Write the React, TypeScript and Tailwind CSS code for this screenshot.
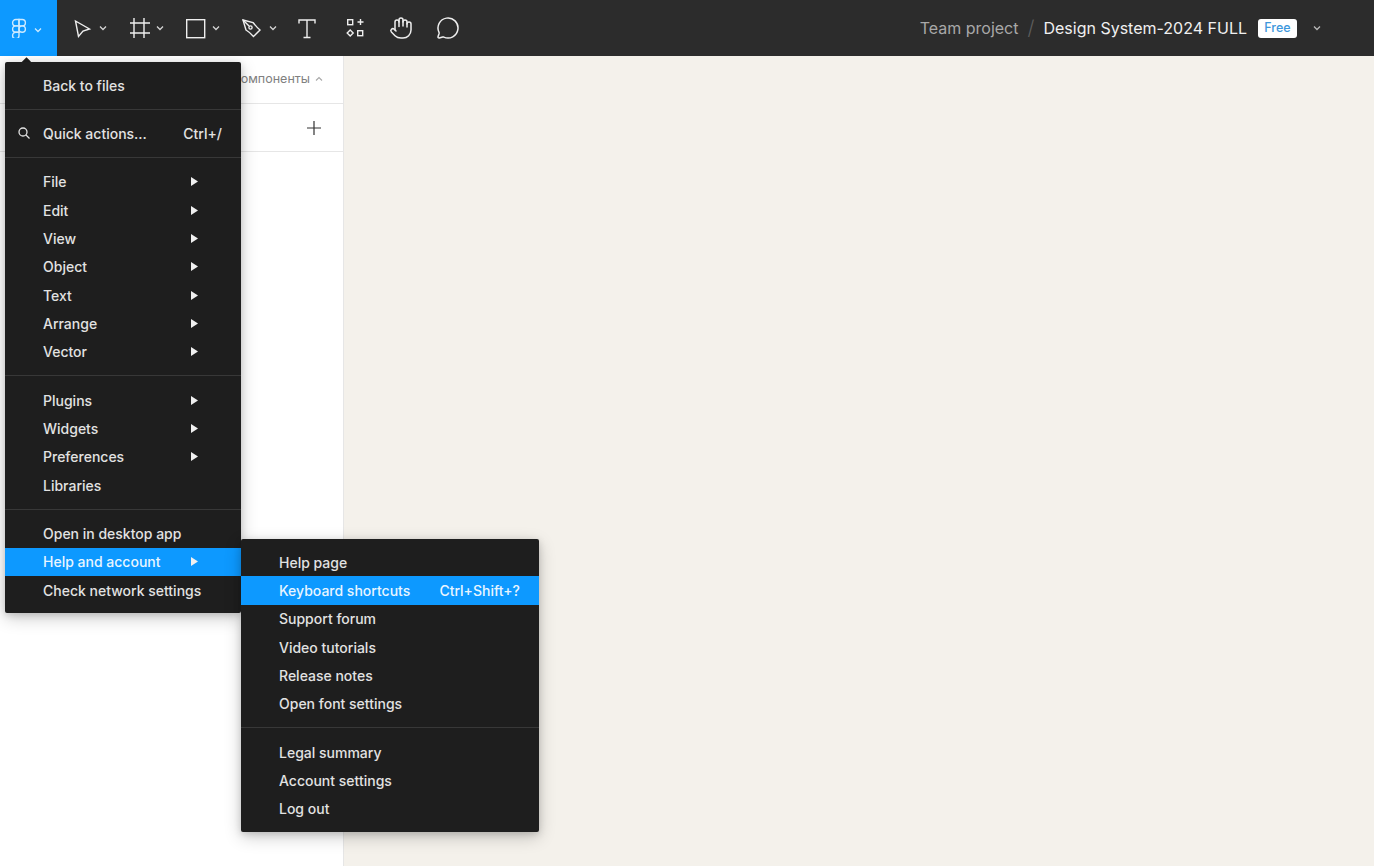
import { Hand, MessageCircle } from "lucide-react";

function Chevron({ className = "", color = "#d4d4d4" }: { className?: string; color?: string }) {
  return (
    <svg width="8" height="8" viewBox="0 0 8 8" fill="none" className={className}>
      <path d="M1 2.5 L4 5.5 L7 2.5" stroke={color} strokeWidth="1.3" />
    </svg>
  );
}

function Icon({ className = "", children }: { className?: string; children: React.ReactNode }) {
  return (
    <svg width="24" height="24" viewBox="0 0 24 24" fill="none" stroke="#eeeeee" strokeWidth="1.4" className={className}>
      {children}
    </svg>
  );
}

function Tri({ }: {}) {
  return (
    <svg width="7" height="9" viewBox="0 0 7 9" className="ml-auto mr-[24px]">
      <path d="M0 0 L7 4.5 L0 9 Z" fill="#f0f0f0" />
    </svg>
  );
}

function Item({ label, hint, arrow, active, icon, sub }: { label: string; hint?: string; arrow?: boolean; active?: boolean; icon?: boolean; sub?: boolean }) {
  return (
    <div className={`flex items-center h-[28.33px] ${sub ? "pl-[38px] pr-[19px]" : "pl-[38px] pr-[19px]"} relative ${active ? "bg-[#0d99ff] text-[#e8f5ff]" : "text-[#e2e2e2]"}`}>
      {icon && (
        <svg width="14" height="14" viewBox="0 0 14 14" fill="none" stroke="#e2e2e2" strokeWidth="1.3" className="absolute left-[12px] top-[7px]">
          <circle cx="6" cy="6" r="4" />
          <path d="M9 9 L12.5 12.5" />
        </svg>
      )}
      <span>{label}</span>
      {hint && <span className="ml-auto">{hint}</span>}
      {arrow && <Tri />}
    </div>
  );
}

function Sep() {
  return <div className="h-px bg-[#383838] my-[9.5px]" />;
}

export default function App() {
  return (
    <div className="relative w-[1374px] h-[866px] overflow-hidden bg-[#f4f1eb] font-['Inter',sans-serif]">
      <header className="flex items-center h-[56px] bg-[#2c2c2c]">
        <div className="flex items-center w-[57px] h-full bg-[#0d99ff] pl-[11px]">
          <svg width="16" height="20" viewBox="0 0 16 20" fill="none" stroke="#cdeaff" strokeWidth="1.4">
            <path d="M8 1.5 H4.8 A3.2 3.2 0 0 0 4.8 7.9 H8 Z" />
            <path d="M8 1.5 H11.2 A3.2 3.2 0 0 1 11.2 7.9 H8 Z" />
            <path d="M8 7.9 H4.8 A3.2 3.2 0 0 0 4.8 14.3 H8 Z" />
            <circle cx="11.2" cy="11.1" r="3.2" />
            <path d="M8 14.3 H4.8 A3.2 3.2 0 1 0 8 17.5 Z" />
          </svg>
          <Chevron className="ml-[7px] mt-[3px]" color="#cdeaff" />
        </div>
        <Icon className="ml-[13px]">
          <path d="M5.5 5 L19.5 13 L13 15 L8.5 20.5 Z" />
        </Icon>
        <Chevron className="ml-[5px]" />
        <Icon className="ml-[21px]">
          <path d="M6 2 V22 M16 2 V22 M2 7 H22 M2 17 H22" />
        </Icon>
        <Chevron className="ml-[4px]" />
        <Icon className="ml-[19px]">
          <rect x="3.7" y="3.7" width="18" height="18" />
        </Icon>
        <Chevron className="ml-[5px]" />
        <Icon className="ml-[19px]">
          <path d="M4 4 L14 6.5 C16 9 18 11.5 21 14 L14.5 20.5 C12 17.5 9.5 15.5 7 14 Z" />
          <path d="M4 4 L10 10" />
          <circle cx="11.5" cy="11.5" r="1.6" />
        </Icon>
        <Chevron className="ml-[6px]" />
        <Icon className="ml-[18px]">
          <path d="M4 7.5 V4 H20 V7.5 M12 4 V21.5 M8.5 21.5 H15.5" />
        </Icon>
        <Icon className="ml-[24px]">
          <rect x="4.7" y="3.7" width="5" height="5" />
          <path d="M17.5 3 V9 M14.5 6 H20.5" />
          <path d="M7.2 14 L10.2 17 L7.2 20 L4.2 17 Z" />
          <rect x="14.7" y="14.7" width="5" height="5" />
        </Icon>
        <Hand size={24} color="#eeeeee" strokeWidth={1.5} className="ml-[22px]" />
        <MessageCircle size={24} color="#eeeeee" strokeWidth={1.5} className="ml-[23px]" />
        <div className="ml-auto flex items-center text-[16px] pr-[53px]">
          <span className="text-[#a8a8a8]">Team project</span>
          <span className="text-[#5e5e5e] mx-[9px] text-[20px] font-light">/</span>
          <span className="text-[#f0f0f0]">Design System-2024 FULL</span>
          <span className="ml-[11px] h-[19px] w-[39px] rounded-[3px] bg-white text-[#3d97dc] text-[12.5px] font-medium flex items-center justify-center">Free</span>
          <Chevron className="ml-[16px]" color="#b8b8b8" />
        </div>
      </header>

      <div className="flex h-[810px]">
        <aside className="w-[344px] bg-white border-r border-[#e6e6e6]">
          <div className="flex items-center justify-end h-[48px] pr-[20px] border-b border-[#e6e6e6] text-[12.5px] text-[#808080]">
            <span>Компоненты</span>
            <svg width="8" height="6" viewBox="0 0 8 6" fill="none" className="ml-[5px] mb-[2px]">
              <path d="M1 4.5 L4 1.5 L7 4.5" stroke="#a8a8a8" strokeWidth="1.1" />
            </svg>
          </div>
          <div className="flex items-center justify-end h-[48px] pr-[22px] border-b border-[#e6e6e6]">
            <svg width="14" height="14" viewBox="0 0 14 14" fill="none" stroke="#333333" strokeWidth="1.2">
              <path d="M7 0 V14 M0 7 H14" />
            </svg>
          </div>
        </aside>
        <main className="flex-1" />
      </div>

      <div className="absolute left-[21px] top-[57px] w-[10px] h-[10px] overflow-hidden">
        <div className="w-[9px] h-[9px] bg-[#1e1e1e] rotate-45 mt-[2px] ml-[0.5px]" />
      </div>

      <div className="absolute left-[5px] top-[62px] w-[236px] py-[9px] bg-[#1e1e1e] rounded-[2px] text-[14px] font-medium shadow-[0_5px_17px_rgba(0,0,0,0.2),0_2px_7px_rgba(0,0,0,0.15)]">
        <Item label="Back to files" />
        <Sep />
        <Item label="Quick actions..." hint="Ctrl+/" icon />
        <Sep />
        <Item label="File" arrow />
        <Item label="Edit" arrow />
        <Item label="View" arrow />
        <Item label="Object" arrow />
        <Item label="Text" arrow />
        <Item label="Arrange" arrow />
        <Item label="Vector" arrow />
        <Sep />
        <Item label="Plugins" arrow />
        <Item label="Widgets" arrow />
        <Item label="Preferences" arrow />
        <Item label="Libraries" />
        <Sep />
        <Item label="Open in desktop app" />
        <Item label="Help and account" arrow active />
        <Item label="Check network settings" />
      </div>

      <div className="absolute left-[241px] top-[539px] w-[298px] py-[9px] bg-[#1e1e1e] rounded-[2px] text-[14px] font-medium shadow-[0_5px_17px_rgba(0,0,0,0.2),0_2px_7px_rgba(0,0,0,0.15)]">
        <Item label="Help page" sub />
        <Item label="Keyboard shortcuts" hint="Ctrl+Shift+?" active sub />
        <Item label="Support forum" sub />
        <Item label="Video tutorials" sub />
        <Item label="Release notes" sub />
        <Item label="Open font settings" sub />
        <Sep />
        <Item label="Legal summary" sub />
        <Item label="Account settings" sub />
        <Item label="Log out" sub />
      </div>
    </div>
  );
}
